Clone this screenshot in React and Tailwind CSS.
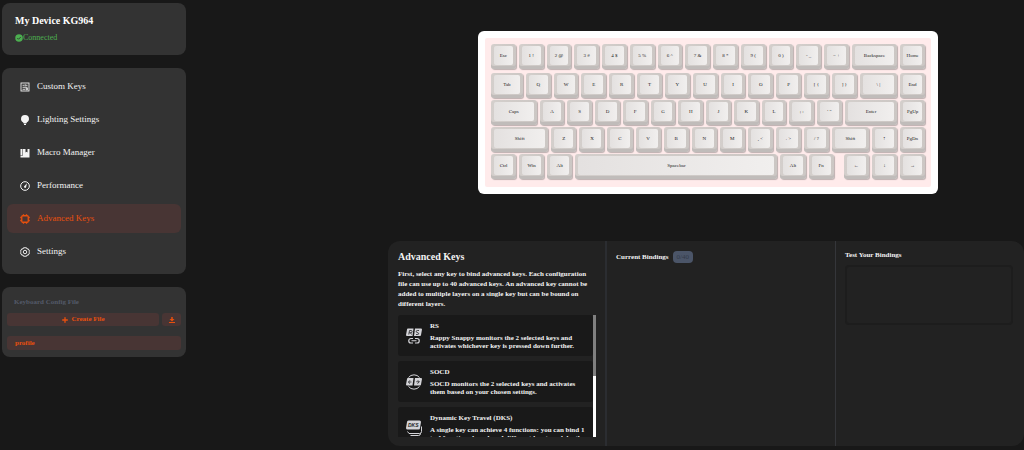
import { Plus } from "lucide-react";

const ROWS = [
  [["Esc"], ["1 !"], ["2 @"], ["3 #"], ["4 $"], ["5 %"], ["6 ^"], ["7 &"], ["8 *"], ["9 ("], ["0 )"], ["- _"], ["= +"], ["Backspace", 1.75], ["Home"]],
  [["Tab", 1.25], ["Q"], ["W"], ["E"], ["R"], ["T"], ["Y"], ["U"], ["I"], ["O"], ["P"], ["[ {"], ["] }"], ["\\ |", 1.45], ["End"]],
  [["Caps", 1.75], ["A"], ["S"], ["D"], ["F"], ["G"], ["H"], ["J"], ["K"], ["L"], ["; :"], ["' \""], ["Enter", 2], ["PgUp"]],
  [["Shift", 2.15], ["Z"], ["X"], ["C"], ["V"], ["B"], ["N"], ["M"], [", <"], [". >"], ["/ ?"], ["Shift", 1.42], ["↑"], ["PgDn"]],
  [["Ctrl"], ["Win"], ["Alt"], ["Spacebar", 7.3], ["Alt"], ["Fn"], [null, 0.25], ["←"], ["↓"], ["→"]],
];

const FEATURES = [
  {
    name: "RS",
    text: "Rappy Snappy monitors the 2 selected keys and activates whichever key is pressed down further.",
    icon: RsIcon,
  },
  {
    name: "SOCD",
    text: "SOCD monitors the 2 selected keys and activates them based on your chosen settings.",
    icon: SocdIcon,
  },
  {
    name: "Dynamic Key Travel (DKS)",
    text: "A single key can achieve 4 functions: you can bind 1 to 4 functions based on 4 different key travel depths.",
    icon: DksIcon,
  },
];

const NAV = [
  { label: "Custom Keys", icon: CustomKeysIcon },
  { label: "Lighting Settings", icon: BulbIcon },
  { label: "Macro Manager", icon: MacroIcon },
  { label: "Performance", icon: GaugeIcon },
  { label: "Advanced Keys", icon: ChipIcon, active: true },
  { label: "Settings", icon: GearIcon },
];

function CheckIcon() {
  return (
    <svg viewBox="0 0 16 16" className="size-2">
      <circle cx="8" cy="8" r="7.500" fill="currentColor" />
      <path d="m4.500 8 2.500 2.500L11.500 6" fill="none" stroke="#333" strokeWidth="1.800" />
    </svg>
  );
}

function CustomKeysIcon() {
  return (
    <svg viewBox="0 0 20 20" className="size-[10px]" fill="none" stroke="currentColor" strokeWidth="1.800">
      <rect x="2" y="2" width="16" height="16" />
      <path d="M5 6.500h4M12 6.500h3M10.500 4.500v4M5 10.500h10M5 14.500h5M12 12.500h3v3h-3z" />
    </svg>
  );
}

function BulbIcon() {
  return (
    <svg viewBox="0 0 20 20" className="size-[10px]" fill="currentColor">
      <path d="M10 0a8 8 0 0 0-8 8c0 3 1.700 5.300 4 6.500L7.500 17h5L14 14.500c2.300-1.200 4-3.500 4-6.500a8 8 0 0 0-8-8zM8 18h4v2H8z" />
    </svg>
  );
}

function MacroIcon() {
  return (
    <svg viewBox="0 0 20 20" className="size-[10px]" fill="currentColor">
      <path d="M1 2h3v13H1zM5 2h6v7l2-1.500L15 9V2h4v17H1v-3h4z" />
    </svg>
  );
}

function GaugeIcon() {
  return (
    <svg viewBox="0 0 20 20" className="size-[10px]" fill="none" stroke="currentColor" strokeWidth="2">
      <circle cx="10" cy="10" r="8.700" />
      <path d="M14 4.500 12 13a2.300 2.300 0 0 1-4-2z" fill="currentColor" stroke="none" />
    </svg>
  );
}

function ChipIcon() {
  return (
    <svg viewBox="0 0 20 20" className="size-[10px]" fill="none" stroke="currentColor" strokeWidth="2.600">
      <rect x="3.500" y="3.500" width="13" height="13" rx="2" />
      <path d="M7 .5v3M13 .5v3M7 16.500v3M13 16.500v3M.5 7h3M.5 13h3M16.500 7h3M16.500 13h3" />
    </svg>
  );
}

function GearIcon() {
  return (
    <svg viewBox="0 0 20 20" className="size-[10px]" fill="none" stroke="currentColor" strokeWidth="1.900">
      <path d="M7 1.500h6l1 2.500 2.500-.3 2.700 4.800L17.500 10l1.700 1.500-2.700 4.800L14 16l-1 2.500H7L6 16l-2.500.3-2.700-4.800L2.500 10 .8 8.500l2.700-4.800L6 4z" />
      <circle cx="10" cy="10" r="3.500" />
    </svg>
  );
}

function DownloadIcon() {
  return (
    <svg viewBox="0 0 12 12" className="size-[6px]" fill="currentColor">
      <path d="M4.500 0h3v4H11L6 9 1 4h3.500zM0 10h12v2H0z" />
    </svg>
  );
}

function RsIcon() {
  return (
    <svg viewBox="0 0 32 32" className="size-4" fill="#d4d4d8">
      <path d="M4 1h11l-2 15H2a2 2 0 0 1-2-2L2 3a2 2 0 0 1 2-2zM18 1h12a2 2 0 0 1 2 2l-2 11a2 2 0 0 1-2 2H16z" />
      <path d="M5.500 13 7 5h3a2 2 0 0 1 0 4.500H6.500M9 9.500l2 3.500M26 5h-3a2 2 0 0 0-1 4l2 .5a1.800 1.800 0 0 1-1 3.500h-3" fill="none" stroke="#27272a" strokeWidth="1.700" />
      <path d="M14 21h-4a4.500 4.500 0 0 0 0 9h4M18 21h4a4.500 4.500 0 0 1 0 9h-4M11 25.500h10" fill="none" stroke="#d4d4d8" strokeWidth="2.400" />
    </svg>
  );
}

function SocdIcon() {
  return (
    <svg viewBox="0 0 32 32" className="size-4" fill="#d4d4d8">
      <path d="M5 7a14 14 0 0 1 22 0M5 25a14 14 0 0 0 22 0" fill="none" stroke="#d4d4d8" strokeWidth="2" />
      <path d="M4 8h11l-2 15H2a2 2 0 0 1-2-2l2-11a2 2 0 0 1 2-2zM18 8h12a2 2 0 0 1 2 2l-2 11a2 2 0 0 1-2 2H16z" />
      <path d="M8 12.500 5 16l2.500 3.500M5 16h6M23.500 12.500l3 3-3.500 4M20.500 15.500h6" fill="none" stroke="#27272a" strokeWidth="1.600" />
    </svg>
  );
}

function DksIcon() {
  return (
    <svg viewBox="0 0 32 32" className="size-4" fill="#d4d4d8">
      <path d="M5 1h22a3 3 0 0 1 3 3l-2 12a3 3 0 0 1-3 3H3a3 3 0 0 1-3-3L2 4a3 3 0 0 1 3-3z" />
      <path d="M31 13v10a4 4 0 0 1-4 4H6l-3-4M29 26v1a4 4 0 0 1-4 4H9" fill="none" stroke="#d4d4d8" strokeWidth="2" />
      <text x="4" y="14" fontSize="10" fontWeight="700" fontStyle="italic" fontFamily="Liberation Sans, sans-serif" fill="#27272a">DKS</text>
    </svg>
  );
}

function Keycap({ label }) {
  return (
    <button className="flex h-[25px] w-full rounded-[3px] bg-linear-to-r from-[#d4cfcc] to-[#ccc7c4] px-[3px] pt-[2px] pb-1 shadow-[1px_1px_1px_#bdb0b0,inset_0_-3px_0_#c0bcba]">
      <span className="flex flex-1 items-center justify-center rounded-[2px] bg-linear-to-r from-[#e4e1e0] to-[#f1efee] text-[5px] leading-none text-[#222]">
        {label}
      </span>
    </button>
  );
}

function Keyboard() {
  return (
    <div className="ml-1 w-full max-w-[460px] rounded-md bg-white p-[7px]">
      <div className="flex flex-col gap-[2px] rounded-[2px] bg-[#ffebeb] pt-[6px] pr-[3px] pb-2 pl-[6px]">
        {ROWS.map((row, r) => (
          <div key={r} className="flex first:mb-[2px]">
            {row.map(([label, units = 1], i) => (
              <div key={i} className="min-w-0 basis-0" style={{ flexGrow: units }}>
                <div className="pr-[3px]">{label && <Keycap label={label} />}</div>
              </div>
            ))}
          </div>
        ))}
      </div>
    </div>
  );
}

function Sidebar() {
  return (
    <aside className="flex w-[184px] shrink-0 flex-col gap-[13px] pt-[3px]">
      <section className="rounded-lg bg-[#333] px-[13px] py-3">
        <h1 className="text-[10px] leading-3 font-bold text-white">My Device KG964</h1>
        <p className="mt-[6px] flex items-center text-[8px] leading-[10px] text-[#4caf50]">
          <CheckIcon />
          Connected
        </p>
      </section>

      <nav className="flex flex-col gap-1 rounded-lg bg-[#333] px-[5px] pt-1 pb-2">
        {NAV.map(({ label, icon: Icon, active }) => (
          <a
            key={label}
            href="#"
            className={`flex h-[29px] items-center gap-[7px] rounded-md px-[13px] text-[9px] ${
              active ? "bg-[#483534] text-[#e8500e]" : "text-[#f4f4f4]"
            }`}
          >
            <Icon />
            {label}
          </a>
        ))}
      </nav>

      <section className="rounded-lg bg-[#333] px-[5px] pt-[11px] pb-[7px] text-[7px] font-bold">
        <h2 className="px-[7px] leading-2 text-[#535a69]">Keyboard Config File</h2>
        <div className="mt-[7px] flex gap-[3px] text-[#e8500e]">
          <button className="flex h-[13px] flex-1 items-center justify-center gap-[2px] rounded-[3px] bg-[#483534]">
            <Plus className="size-2" strokeWidth={4} />
            Create File
          </button>
          <button aria-label="Download" className="flex h-[13px] w-[19px] items-center justify-center rounded-[3px] bg-[#483534]">
            <DownloadIcon />
          </button>
        </div>
        <button className="mt-[10px] flex h-[14px] w-full items-center rounded-[3px] bg-[#483534] px-2 text-[#e8500e]">
          profile
        </button>
      </section>
    </aside>
  );
}

function AdvancedPanel() {
  return (
    <section className="flex h-[205px] w-full rounded-xl bg-[#222] font-bold text-[#f2f2f2]">
      <div className="flex w-[219px] shrink-0 flex-col border-r-2 border-[#2b2d31] pt-[10px] pr-[9px] pb-[9px] pl-[10px]">
        <h2 className="text-[10px] leading-3">Advanced Keys</h2>
        <p className="mt-[6px] text-[7px] leading-[10px]">
          First, select any key to bind advanced keys. Each configuration file can use up to 40 advanced keys. An
          advanced key cannot be added to multiple layers on a single key but can be bound on different layers.
        </p>
        <div className="mt-[6px] flex min-h-0 flex-1">
          <ul className="flex min-w-0 flex-1 flex-col gap-[5px] overflow-hidden">
            {FEATURES.map(({ name, text, icon: Icon }) => (
              <li key={name} className="flex shrink-0 items-center gap-2 rounded-[3px] bg-[#191919] pt-[7px] pr-[6px] pb-[6px] pl-2 text-[7px] leading-2">
                <Icon />
                <div className="flex-1">
                  <h3>{name}</h3>
                  <p className="mt-1">{text}</p>
                </div>
              </li>
            ))}
          </ul>
          <div className="w-[3px] bg-white">
            <div className="h-1/2 bg-[#808080]" />
          </div>
        </div>
      </div>

      <div className="flex-[5] border-r border-[#35363a] px-[9px] pt-[10px]">
        <div className="flex items-center gap-1">
          <h2 className="text-[7px]">Current Bindings</h2>
          <span className="rounded-[4px] bg-[#4b5568] px-1 text-[7px] leading-3 font-normal text-[#333b49]">0/40</span>
        </div>
      </div>

      <div className="flex-[4] pt-[10px] pr-[11px] pl-[9px]">
        <label htmlFor="test" className="block text-[7px] leading-2">Test Your Bindings</label>
        <textarea id="test" className="mt-[6px] block h-[60px] w-full resize-none rounded-[4px] border-2 border-[#1d1d1d] bg-transparent" />
      </div>
    </section>
  );
}

export default function App() {
  return (
    <div className="flex min-h-screen bg-[#181818] pl-[2px] font-['Liberation_Serif',serif]">
      <Sidebar />
      <main className="ml-[202px] flex min-w-0 flex-1 flex-col items-center gap-[47px] pt-[31px]">
        <Keyboard />
        <AdvancedPanel />
      </main>
    </div>
  );
}
